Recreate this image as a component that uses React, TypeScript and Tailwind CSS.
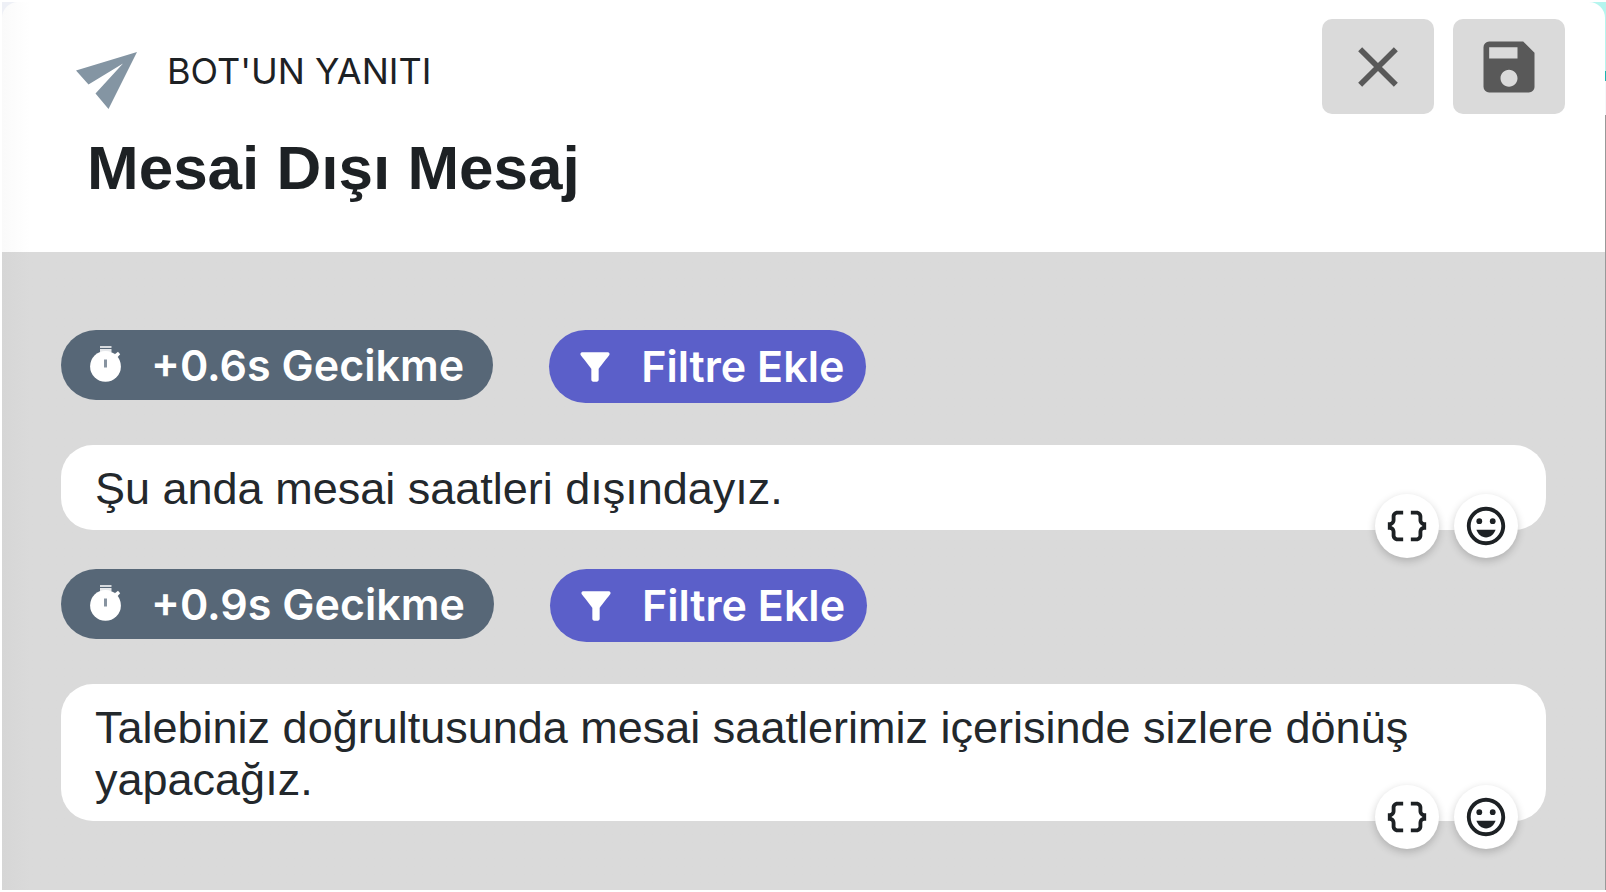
import {
	MdClose,
	MdDataObject,
	MdFilterAlt,
	MdOutlineEmojiEmotions,
	MdSave,
} from "react-icons/md"

type Message = {
	id: number
	delay: string
	text: string
}

const messages: Message[] = [
	{ id: 1, delay: "+0.6s Gecikme", text: "Şu anda mesai saatleri dışındayız." },
	{
		id: 2,
		delay: "+0.9s Gecikme",
		text: "Talebiniz doğrultusunda mesai saatlerimiz içerisinde sizlere dönüş yapacağız.",
	},
]

const headerButton =
	"flex items-center justify-center w-28 h-[95px] rounded-[10px] bg-[#dadada] text-[#595959]"
const roundButton =
	"flex items-center justify-center size-16 rounded-full bg-white text-[#1d2124] shadow-[0_3px_8px_rgba(0,0,0,0.2)]"
const pill =
	"flex items-center rounded-full text-white font-semibold font-['Inter',sans-serif] text-[43px]"

const PlaneIcon = () => (
	<svg viewBox="0 0 61 57" className="w-[61px] h-[57px] fill-[#8495a3]">
		<path d="M0 18.5 61 0 32.5 57 19.5 41.5 47 11.5 12.5 32.5Z" />
	</svg>
)

const StopwatchIcon = () => (
	<svg viewBox="0 0 31 36" className="w-[31px] h-9 mb-0.5">
		<path fill="#fff" fillOpacity="0.75" d="M10 0h11.5v2H10z" />
		<path fill="#fff" fillOpacity="0.85" d="M10 3h11.5v3H10z" />
		<path fill="#fff" d="M24.5 8.5 28 5.8l2.2 2.4-3 3.3z" />
		<circle cx="15.5" cy="20.4" r="15.4" fill="#fff" />
		<path fill="#8793a0" d="M14 13.5h3v8h-3z" />
	</svg>
)

const MessageBlock = ({ message }: { message: Message }) => (
	<section>
		<div className="flex items-start gap-14">
			<button type="button" className={`${pill} gap-[30px] h-[70px] px-[29px] bg-[#576777]`}>
				<StopwatchIcon />
				{message.delay}
			</button>
			<button type="button" className={`${pill} gap-6 h-[73px] pl-6 pr-[22px] bg-[#5b5fc9]`}>
				<MdFilterAlt className="size-11" />
				Filtre Ekle
			</button>
		</div>
		<div className="relative mt-[42px] px-[34px] pt-[18px] pb-[15px] rounded-[32px] bg-white">
			<p className="text-[45px] leading-[52px] text-[#23282c]">{message.text}</p>
			{/* MESSAGE TOOLS */}
			<div className="absolute right-7 -bottom-7 flex gap-[15px]">
				<button type="button" aria-label="Değişken ekle" className={roundButton}>
					<MdDataObject className="size-[46px]" />
				</button>
				<button type="button" aria-label="Emoji ekle" className={roundButton}>
					<MdOutlineEmojiEmotions className="size-[46px]" />
				</button>
			</div>
		</div>
	</section>
)

const App = () => {
	return (
		<div className="min-h-screen py-0.5 pl-0.5 bg-white font-['Liberation_Sans',Arial,sans-serif]">
			{/* HEADER, with the page behind showing at its corners and right edge */}
			<div className="pr-px bg-[linear-gradient(to_right,#eef0f6_50%,transparent_50%),linear-gradient(to_bottom,#b5f5ee_69px,#19b5b0_69px,#19b5b0_79px,#f5f7fa_79px,#f5f7fa_113px,#999999_113px)]">
				<header className="flex justify-between h-[250px] pt-[17px] pr-10 pl-[74px] rounded-t-2xl bg-linear-to-r from-[#fafafa] to-white to-[28px]">
					<div>
						<div className="flex items-start gap-[30px] pt-[33px]">
							<PlaneIcon />
							<span className="text-[36px] leading-[38px] text-[#1d2124] font-['Inter',sans-serif]">
								BOT'UN YANITI
							</span>
						</div>
						<h1 className="pl-[11px] mt-[23px] text-[62px] leading-[72px] font-bold text-[#1d2124]">
							Mesai Dışı Mesaj
						</h1>
					</div>
					<div className="flex items-start gap-[19px]">
						<button type="button" aria-label="Kapat" className={headerButton}>
							<MdClose className="size-[68px]" />
						</button>
						<button type="button" aria-label="Kaydet" className={headerButton}>
							<MdSave className="size-[68px]" />
						</button>
					</div>
				</header>
			</div>
			<main className="flex flex-col gap-[39px] pt-[78px] pb-[69px] px-[59px] border-r border-[#999999] bg-linear-to-r from-[#d6d6d6] to-[#dadada] to-[28px]">
				{messages.map((message) => (
					<MessageBlock key={message.id} message={message} />
				))}
			</main>
		</div>
	)
}
export default App
